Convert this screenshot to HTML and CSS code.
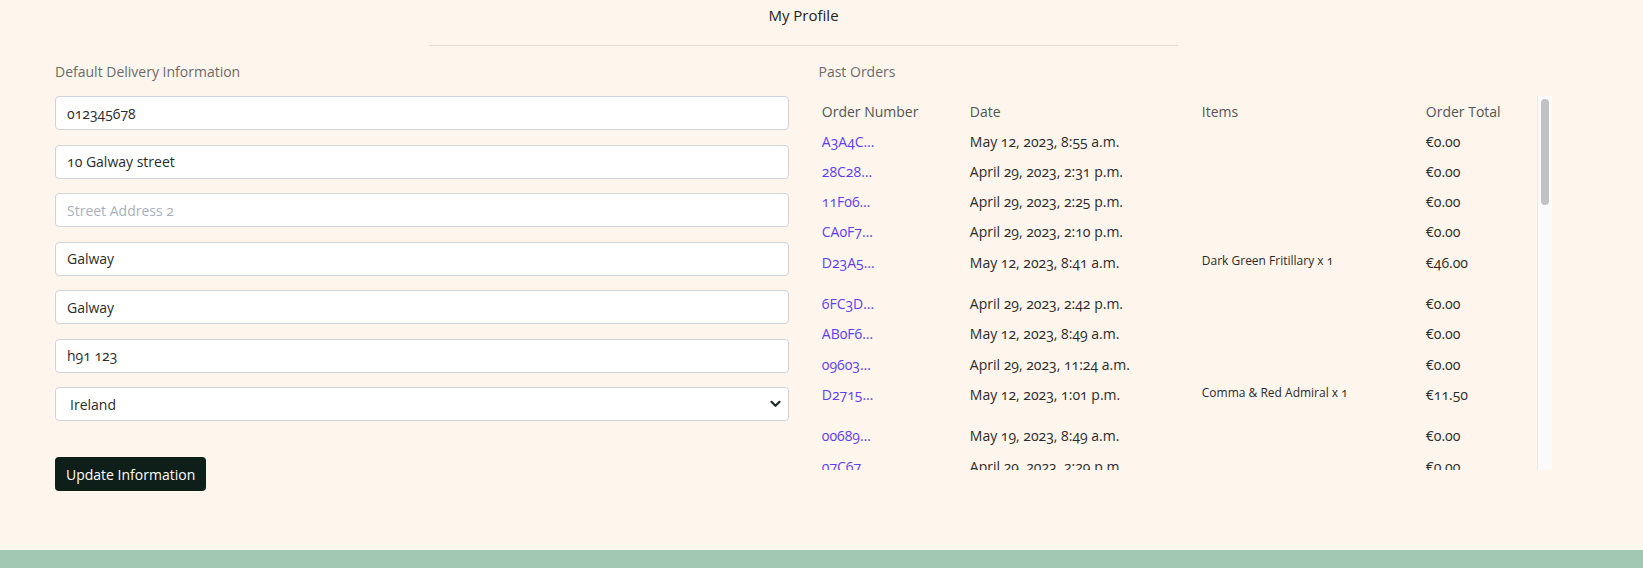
FILE: index.html
```html
<!DOCTYPE html>
<html lang="en">
<head>
<meta charset="utf-8">
<title>My Profile</title>
<link rel="stylesheet" href="styles.css">
</head>
<body>
<div class="page">
  <main class="main">
    <header class="profile-head">
      <h1 class="profile-title">My Profile</h1>
      <hr class="profile-rule">
    </header>
    <div class="columns">
      <section class="col">
        <p class="section-label">Default Delivery Information</p>
        <form class="delivery-form">
          <input class="field" type="text" value="012345678">
          <input class="field" type="text" value="10 Galway street">
          <input class="field" type="text" placeholder="Street Address 2">
          <input class="field" type="text" value="Galway">
          <input class="field" type="text" value="Galway">
          <input class="field" type="text" value="h91 123">
          <div class="select-wrap">
            <select class="field select">
              <option>Ireland</option>
            </select>
            <svg class="chev" width="11" height="8" viewBox="0 0 11 8"><path d="M1.5 1.8 L5.5 5.8 L9.5 1.8" fill="none" stroke="#1f2a26" stroke-width="2.2" stroke-linecap="round" stroke-linejoin="round"/></svg>
          </div>
          <button type="button" class="btn">Update Information</button>
        </form>
      </section>
      <section class="col">
        <p class="section-label">Past Orders</p>
        <div class="orders-box">
          <div class="orders-scroll">
            <table class="orders">
              <colgroup><col class="c1"><col class="c2"><col class="c3"><col class="c4"></colgroup>
              <thead>
                <tr><th>Order Number</th><th>Date</th><th>Items</th><th>Order Total</th></tr>
              </thead>
              <tbody>
                <tr><td><a href="#">A3A4C…</a></td><td>May 12, 2023, 8:55 a.m.</td><td></td><td>€0.00</td></tr>
                <tr><td><a href="#">28C28…</a></td><td>April 29, 2023, 2:31 p.m.</td><td></td><td>€0.00</td></tr>
                <tr><td><a href="#">11F06…</a></td><td>April 29, 2023, 2:25 p.m.</td><td></td><td>€0.00</td></tr>
                <tr><td><a href="#">CA0F7…</a></td><td>April 29, 2023, 2:10 p.m.</td><td></td><td>€0.00</td></tr>
                <tr><td><a href="#">D23A5…</a></td><td>May 12, 2023, 8:41 a.m.</td><td><ul class="items"><li>Dark Green Fritillary x 1</li></ul></td><td>€46.00</td></tr>
                <tr><td><a href="#">6FC3D…</a></td><td>April 29, 2023, 2:42 p.m.</td><td></td><td>€0.00</td></tr>
                <tr><td><a href="#">AB0F6…</a></td><td>May 12, 2023, 8:49 a.m.</td><td></td><td>€0.00</td></tr>
                <tr><td><a href="#">09603…</a></td><td>April 29, 2023, 11:24 a.m.</td><td></td><td>€0.00</td></tr>
                <tr><td><a href="#">D2715…</a></td><td>May 12, 2023, 1:01 p.m.</td><td><ul class="items"><li>Comma &amp; Red Admiral x 1</li></ul></td><td>€11.50</td></tr>
                <tr><td><a href="#">00689…</a></td><td>May 19, 2023, 8:49 a.m.</td><td></td><td>€0.00</td></tr>
                <tr><td><a href="#">07C67…</a></td><td>April 29, 2023, 2:29 p.m.</td><td></td><td>€0.00</td></tr>
                <tr><td><a href="#">5E1B2…</a></td><td>April 29, 2023, 2:05 p.m.</td><td></td><td>€0.00</td></tr>
                <tr><td><a href="#">9B7D4…</a></td><td>May 12, 2023, 9:02 a.m.</td><td></td><td>€0.00</td></tr>
                <tr><td><a href="#">F04A1…</a></td><td>April 29, 2023, 1:58 p.m.</td><td></td><td>€0.00</td></tr>
                <tr><td><a href="#">3C9E8…</a></td><td>May 12, 2023, 8:37 a.m.</td><td><ul class="items"><li>Peacock x 1</li></ul></td><td>€24.00</td></tr>
                <tr><td><a href="#">B62F0…</a></td><td>April 29, 2023, 2:14 p.m.</td><td></td><td>€0.00</td></tr>
                <tr><td><a href="#">71D3A…</a></td><td>May 19, 2023, 8:52 a.m.</td><td></td><td>€0.00</td></tr>
                <tr><td><a href="#">E8A05…</a></td><td>April 29, 2023, 11:31 a.m.</td><td></td><td>€0.00</td></tr>
                <tr><td><a href="#">4F2C9…</a></td><td>May 12, 2023, 1:10 p.m.</td><td></td><td>€0.00</td></tr>
                <tr><td><a href="#">C17B6…</a></td><td>April 29, 2023, 2:36 p.m.</td><td></td><td>€0.00</td></tr>
              </tbody>
            </table>
          </div>
          <div class="scrollbar" aria-hidden="true"><div class="thumb"></div></div>
        </div>
      </section>
    </div>
  </main>
  <footer class="footer"></footer>
</div>
</body>
</html>
```

FILE: styles.css
```css
* { box-sizing: border-box; }

html, body {
  margin: 0;
  padding: 0;
}

body {
  background: #fef5ec;
  color: #2b2b2b;
  font-family: "Open Sans", "Liberation Sans", sans-serif;
  font-size: 14px;
  line-height: 1.5;
  font-variant-numeric: oldstyle-nums;
}

.page {
  height: 100vh;
  display: flex;
  flex-direction: column;
  overflow: hidden;
}

.main {
  flex: 1;
  padding: 0 91px 0 55px;
}

.profile-head {
  width: 749px;
  margin-left: 374px;
  padding-top: 4px;
}

.profile-title {
  margin: 0;
  font-size: 15px;
  font-weight: 400;
  line-height: 22px;
  text-align: center;
  color: #222;
}

.profile-rule {
  margin: 19px 0 0;
  border: 0;
  border-top: 1px solid #e2ddd6;
}

.columns {
  display: grid;
  grid-template-columns: 1fr 1fr;
  column-gap: 30px;
}

.section-label {
  margin: 15px 0 14px;
  color: #6b6b6b;
  font-size: 14px;
  line-height: 21px;
}

.delivery-form {
  display: flex;
  flex-direction: column;
}

.field {
  display: block;
  width: 100%;
  height: 34px;
  margin: 0 0 14.5px;
  padding: 0 11px;
  border: 1px solid #cfd3da;
  border-radius: 4px;
  background: #fff;
  color: #2b2b2b;
  font-family: inherit;
  font-size: 14px;
  font-variant-numeric: oldstyle-nums;
  outline: none;
}

.field::placeholder {
  color: #a9b0bd;
}

.select-wrap {
  position: relative;
}

.select {
  appearance: none;
  -webkit-appearance: none;
  padding-left: 14px;
  margin-bottom: 36px;
}

.chev {
  position: absolute;
  right: 8px;
  top: 13px;
  pointer-events: none;
}

.btn {
  align-self: flex-start;
  height: 34px;
  padding: 0 11px;
  border: 0;
  border-radius: 4px;
  background: #0e1e18;
  color: #fff;
  font-family: inherit;
  font-size: 14px;
}

.orders-box {
  display: flex;
  height: 374px;
  margin-left: -1.5px;
}

.orders-scroll {
  flex: 1;
  min-width: 0;
  overflow: hidden;
}

.scrollbar {
  flex: 0 0 15px;
  padding: 3px 3px 0 3px;
  background: #fafafa;
  border-left: 1px solid #e9e9e9;
}

.thumb {
  height: 106px;
  border-radius: 4px;
  background: #c1c1c1;
}

.orders {
  width: 100%;
  border-collapse: collapse;
  table-layout: fixed;
}

.c1 { width: 148px; }
.c2 { width: 232px; }
.c3 { width: 224px; }
.c4 { width: 116px; }

.orders th,
.orders td {
  padding: 4.6px 4.8px;
  text-align: left;
  vertical-align: top;
  line-height: 21px;
  white-space: nowrap;
}

.orders th {
  font-weight: 400;
  color: #555;
}

.orders a {
  color: #5d3ef6;
  text-decoration: none;
}

.items {
  list-style: none;
  margin: 0 0 14.5px;
  padding: 0;
  font-size: 12px;
  line-height: 18px;
}

.footer {
  flex: 0 0 18px;
  background: #a2c7b2;
}
```
